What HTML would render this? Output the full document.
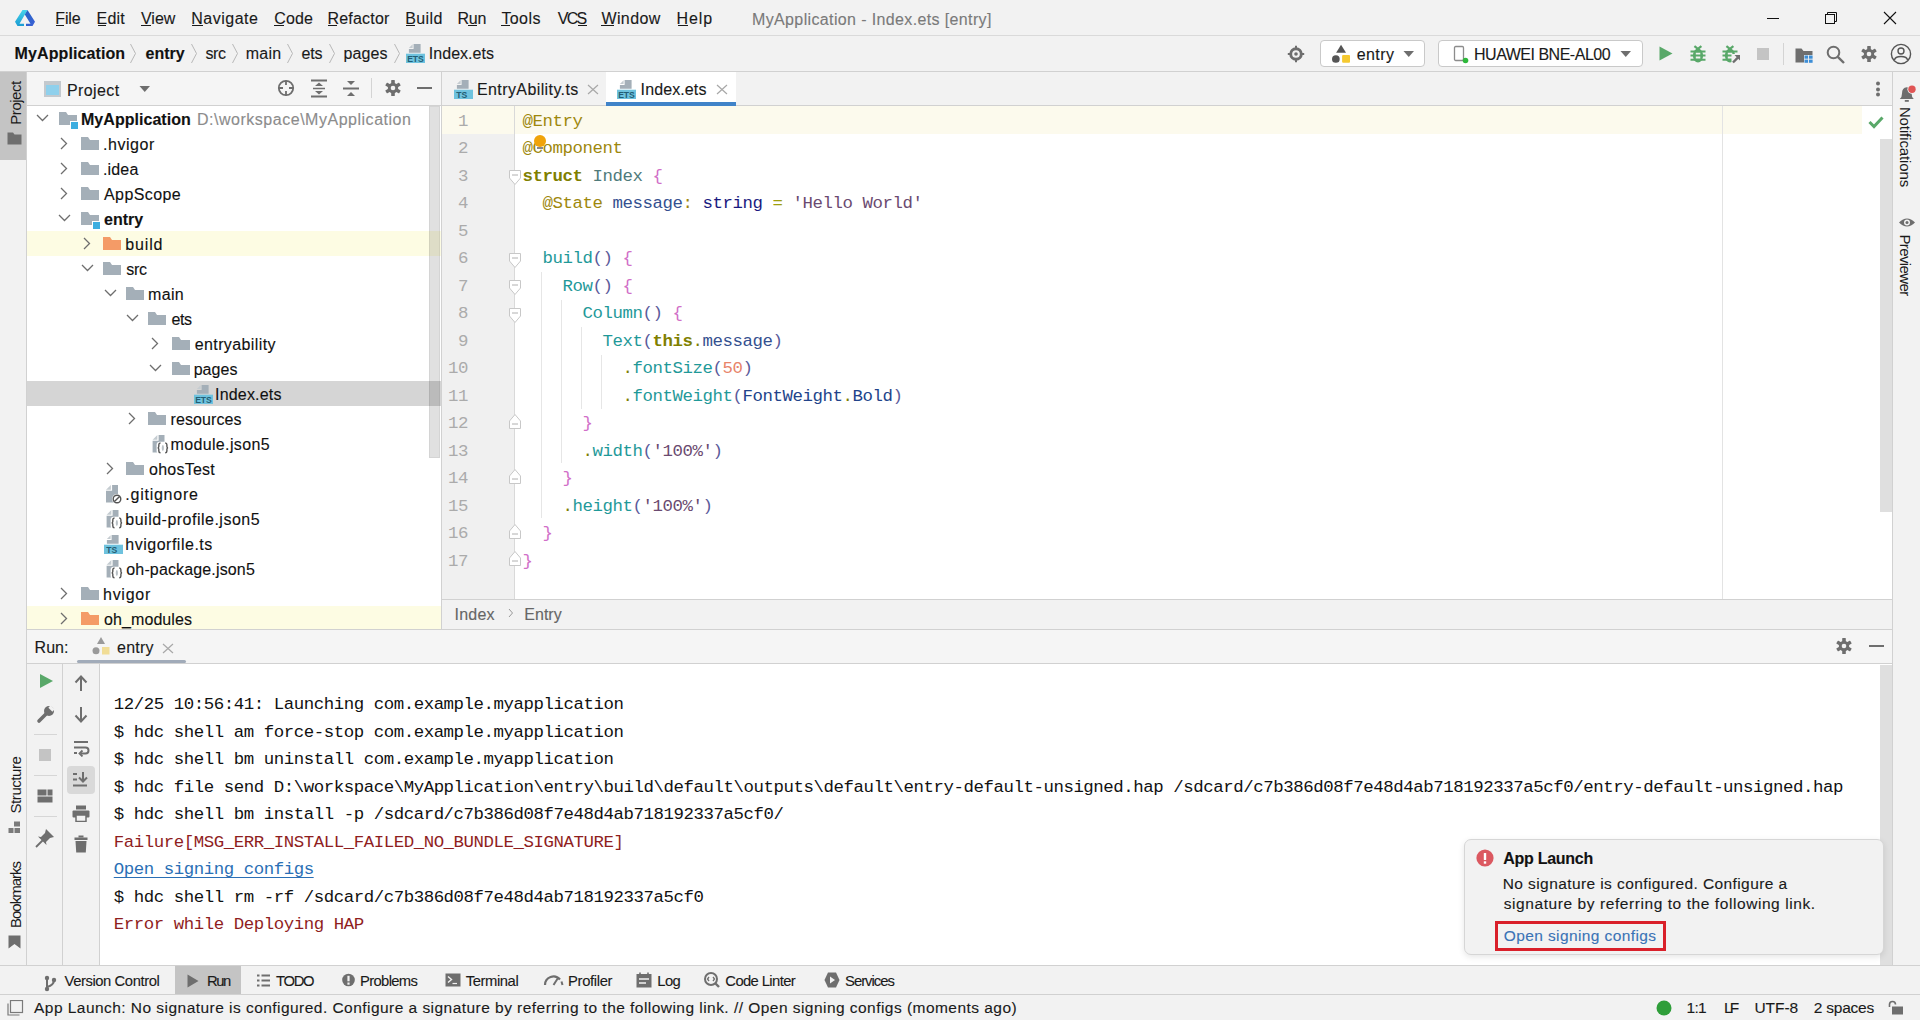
<!DOCTYPE html><html><head><meta charset="utf-8"><style>
*{margin:0;padding:0;box-sizing:border-box}
html,body{width:1920px;height:1020px;overflow:hidden;background:#f2f2f2;position:relative;font-family:'Liberation Sans',sans-serif}
body>div,body>svg{position:absolute}
.t{white-space:pre}
.s{-webkit-text-stroke:0.12px currentColor}
</style></head><body>
<div style="left:0px;top:0px;width:1920px;height:1020px;background:#f2f2f2;"></div>
<div style="left:0px;top:35px;width:1920px;height:1px;background:#dadada;"></div>
<div style="left:0px;top:71px;width:1920px;height:1px;background:#d1d1d1;"></div>
<div style="left:0px;top:72px;width:26px;height:893px;background:#f2f2f2;"></div>
<div style="left:26px;top:72px;width:1px;height:893px;background:#d1d1d1;"></div>
<div style="left:0px;top:72px;width:26px;height:88px;background:#c4c4c4;"></div>
<div style="left:27px;top:72px;width:414px;height:33px;background:#f5f5f5;"></div>
<div style="left:27px;top:105px;width:414px;height:1px;background:#d1d1d1;"></div>
<div style="left:27px;top:106px;width:414px;height:523px;background:#ffffff;"></div>
<div style="left:441px;top:72px;width:1px;height:557px;background:#d1d1d1;"></div>
<div style="left:27px;top:629px;width:1866px;height:1px;background:#d1d1d1;"></div>
<div style="left:442px;top:72px;width:1450px;height:33px;background:#f2f2f2;"></div>
<div style="left:442px;top:105px;width:1450px;height:1px;background:#d1d1d1;"></div>
<div style="left:606px;top:72px;width:130px;height:31px;background:#ffffff;"></div>
<div style="left:606px;top:102px;width:130px;height:4px;background:#4083c9;"></div>
<div style="left:442px;top:106px;width:72px;height:494px;background:#f0f0f0;"></div>
<div style="left:442px;top:106px;width:72px;height:28px;background:#fcfaed;"></div>
<div style="left:514px;top:106px;width:1px;height:494px;background:#d9d9d9;"></div>
<div style="left:515px;top:106px;width:1377px;height:494px;background:#ffffff;"></div>
<div style="left:515px;top:106px;width:1347px;height:28px;background:#fcfaed;"></div>
<div style="left:1722px;top:106px;width:1px;height:494px;background:#e3e3e3;"></div>
<div style="left:1880px;top:139px;width:12px;height:373px;background:#dfdfdf;"></div>
<div style="left:442px;top:599px;width:1450px;height:1px;background:#d1d1d1;"></div>
<div style="left:442px;top:600px;width:1450px;height:29px;background:#f2f2f2;"></div>
<div style="left:1892px;top:72px;width:1px;height:893px;background:#d1d1d1;"></div>
<div style="left:1893px;top:72px;width:27px;height:893px;background:#f2f2f2;"></div>
<div style="left:27px;top:630px;width:1865px;height:33px;background:#f5f5f5;"></div>
<div style="left:27px;top:663px;width:1865px;height:1px;background:#d1d1d1;"></div>
<div style="left:77px;top:660px;width:109px;height:3px;background:#a1abb9;border-radius:2px"></div>
<div style="left:27px;top:664px;width:72px;height:301px;background:#f2f2f2;"></div>
<div style="left:62px;top:664px;width:1px;height:301px;background:#d1d1d1;"></div>
<div style="left:99px;top:664px;width:1px;height:301px;background:#d1d1d1;"></div>
<div style="left:100px;top:664px;width:1792px;height:301px;background:#ffffff;"></div>
<div style="left:1880px;top:665px;width:12px;height:300px;background:#dfdfdf;"></div>
<div style="left:0px;top:965px;width:1920px;height:1px;background:#d1d1d1;"></div>
<div style="left:0px;top:966px;width:1920px;height:28px;background:#f2f2f2;"></div>
<div style="left:175px;top:966px;width:66px;height:28px;background:#c4c4c4;"></div>
<div style="left:0px;top:994px;width:1920px;height:1px;background:#d1d1d1;"></div>
<div style="left:0px;top:995px;width:1920px;height:25px;background:#f2f2f2;"></div>
<div class="t s" style="font-family:'Liberation Sans', sans-serif;font-size:16px;line-height:16px;color:#1a1a1a;font-weight:normal;letter-spacing:-0.161px;left:55.30px;top:11.00px;">File</div>
<div style="left:56px;top:25px;width:8px;height:1px;background:#1a1a1a;"></div>
<div class="t s" style="font-family:'Liberation Sans', sans-serif;font-size:16px;line-height:16px;color:#1a1a1a;font-weight:normal;letter-spacing:0.225px;left:96.50px;top:11.00px;">Edit</div>
<div style="left:98px;top:25px;width:8px;height:1px;background:#1a1a1a;"></div>
<div class="t s" style="font-family:'Liberation Sans', sans-serif;font-size:16px;line-height:16px;color:#1a1a1a;font-weight:normal;letter-spacing:-0.012px;left:141.00px;top:11.00px;">View</div>
<div style="left:141px;top:25px;width:10px;height:1px;background:#1a1a1a;"></div>
<div class="t s" style="font-family:'Liberation Sans', sans-serif;font-size:16px;line-height:16px;color:#1a1a1a;font-weight:normal;letter-spacing:0.493px;left:191.30px;top:11.00px;">Navigate</div>
<div style="left:192px;top:25px;width:11px;height:1px;background:#1a1a1a;"></div>
<div class="t s" style="font-family:'Liberation Sans', sans-serif;font-size:16px;line-height:16px;color:#1a1a1a;font-weight:normal;letter-spacing:0.116px;left:274.30px;top:11.00px;">Code</div>
<div style="left:274px;top:25px;width:10px;height:1px;background:#1a1a1a;"></div>
<div class="t s" style="font-family:'Liberation Sans', sans-serif;font-size:16px;line-height:16px;color:#1a1a1a;font-weight:normal;letter-spacing:0.194px;left:327.50px;top:11.00px;">Refactor</div>
<div style="left:328px;top:25px;width:9px;height:1px;background:#1a1a1a;"></div>
<div class="t s" style="font-family:'Liberation Sans', sans-serif;font-size:16px;line-height:16px;color:#1a1a1a;font-weight:normal;letter-spacing:0.355px;left:405.30px;top:11.00px;">Build</div>
<div style="left:406px;top:25px;width:9px;height:1px;background:#1a1a1a;"></div>
<div class="t s" style="font-family:'Liberation Sans', sans-serif;font-size:16px;line-height:16px;color:#1a1a1a;font-weight:normal;letter-spacing:-0.177px;left:457.40px;top:11.00px;">Run</div>
<div style="left:468px;top:25px;width:9px;height:1px;background:#1a1a1a;"></div>
<div class="t s" style="font-family:'Liberation Sans', sans-serif;font-size:16px;line-height:16px;color:#1a1a1a;font-weight:normal;letter-spacing:0.412px;left:501.40px;top:11.00px;">Tools</div>
<div style="left:501px;top:25px;width:9px;height:1px;background:#1a1a1a;"></div>
<div class="t s" style="font-family:'Liberation Sans', sans-serif;font-size:16px;line-height:16px;color:#1a1a1a;font-weight:normal;letter-spacing:-1.763px;left:557.80px;top:11.00px;">VCS</div>
<div style="left:578px;top:25px;width:9px;height:1px;background:#1a1a1a;"></div>
<div class="t s" style="font-family:'Liberation Sans', sans-serif;font-size:16px;line-height:16px;color:#1a1a1a;font-weight:normal;letter-spacing:0.410px;left:601.40px;top:11.00px;">Window</div>
<div style="left:601px;top:25px;width:13px;height:1px;background:#1a1a1a;"></div>
<div class="t s" style="font-family:'Liberation Sans', sans-serif;font-size:16px;line-height:16px;color:#1a1a1a;font-weight:normal;letter-spacing:0.897px;left:676.60px;top:11.00px;">Help</div>
<div style="left:678px;top:25px;width:10px;height:1px;background:#1a1a1a;"></div>
<div class="t s" style="font-family:'Liberation Sans', sans-serif;font-size:16px;line-height:16px;color:#7a7a7a;font-weight:normal;letter-spacing:0.368px;left:752.00px;top:11.50px;">MyApplication - Index.ets [entry]</div>
<svg style="left:14px;top:8px" width="22" height="19" viewBox="0 0 22 19"><defs><linearGradient id="lg1" x1="0" y1="0" x2="0" y2="1"><stop offset="0" stop-color="#45d4ea"/><stop offset="1" stop-color="#1a9bd2"/></linearGradient>
<linearGradient id="lg2" x1="0" y1="0" x2="1" y2="1"><stop offset="0" stop-color="#2167c4"/><stop offset="1" stop-color="#3d5fd6"/></linearGradient></defs>
<path d="M8.5 2 L13.5 2 L5.5 15.8 L10 15.8 L10 18 L3.5 18 L1 13.8 Z" fill="url(#lg1)"/>
<path d="M13.5 2 L21 13.8 L18.5 18 L12 18 L12 15.8 L16.5 15.8 L10.8 6.5 Z" fill="url(#lg2)"/></svg>
<div style="left:1767px;top:18px;width:12px;height:1px;background:#111;"></div>
<svg style="left:1823px;top:10px" width="16" height="16" viewBox="0 0 16 16"><rect x="2.5" y="4.5" width="9" height="9" fill="none" stroke="#111" stroke-width="1"/><path d="M4.5 4.5 V2.5 H13.5 V11.5 H11.5" fill="none" stroke="#111" stroke-width="1"/></svg>
<svg style="left:1883px;top:11px" width="14" height="14" viewBox="0 0 14 14"><path d="M1 1 L13 13 M13 1 L1 13" stroke="#111" stroke-width="1.1"/></svg>
<div class="t s" style="font-family:'Liberation Sans', sans-serif;font-size:16px;line-height:16px;color:#111;font-weight:bold;letter-spacing:0.095px;left:14.60px;top:46.10px;">MyApplication</div>
<svg style="left:129px;top:43px" width="9" height="21" viewBox="0 0 9 21"><path d="M1.5 1 L6.5 10.5 L1.5 20" fill="none" stroke="#b8b8b8" stroke-width="1"/></svg>
<div class="t s" style="font-family:'Liberation Sans', sans-serif;font-size:16px;line-height:16px;color:#111;font-weight:bold;letter-spacing:-0.007px;left:145.60px;top:46.10px;">entry</div>
<svg style="left:190px;top:43px" width="9" height="21" viewBox="0 0 9 21"><path d="M1.5 1 L6.5 10.5 L1.5 20" fill="none" stroke="#b8b8b8" stroke-width="1"/></svg>
<div class="t s" style="font-family:'Liberation Sans', sans-serif;font-size:16px;line-height:16px;color:#1a1a1a;font-weight:normal;letter-spacing:-0.464px;left:205.50px;top:46.10px;">src</div>
<svg style="left:230.5px;top:43px" width="9" height="21" viewBox="0 0 9 21"><path d="M1.5 1 L6.5 10.5 L1.5 20" fill="none" stroke="#b8b8b8" stroke-width="1"/></svg>
<div class="t s" style="font-family:'Liberation Sans', sans-serif;font-size:16px;line-height:16px;color:#1a1a1a;font-weight:normal;letter-spacing:0.240px;left:245.80px;top:46.10px;">main</div>
<svg style="left:286px;top:43px" width="9" height="21" viewBox="0 0 9 21"><path d="M1.5 1 L6.5 10.5 L1.5 20" fill="none" stroke="#b8b8b8" stroke-width="1"/></svg>
<div class="t s" style="font-family:'Liberation Sans', sans-serif;font-size:16px;line-height:16px;color:#1a1a1a;font-weight:normal;letter-spacing:-0.122px;left:301.50px;top:46.10px;">ets</div>
<svg style="left:328px;top:43px" width="9" height="21" viewBox="0 0 9 21"><path d="M1.5 1 L6.5 10.5 L1.5 20" fill="none" stroke="#b8b8b8" stroke-width="1"/></svg>
<div class="t s" style="font-family:'Liberation Sans', sans-serif;font-size:16px;line-height:16px;color:#1a1a1a;font-weight:normal;letter-spacing:0.102px;left:343.50px;top:46.10px;">pages</div>
<svg style="left:393px;top:43px" width="9" height="21" viewBox="0 0 9 21"><path d="M1.5 1 L6.5 10.5 L1.5 20" fill="none" stroke="#b8b8b8" stroke-width="1"/></svg>
<svg style="left:405.5px;top:44px" width="20" height="20" viewBox="0 0 20 20"><path d="M7.6 0 H14.6 V8.7 H2.9 V5 H7.6 Z" fill="#a4afb8"/><path d="M2.9 4 L6.6 0.3 V4 Z" fill="#c5ccd1"/><rect x="0" y="9.7" width="19" height="9.3" fill="#6ec2de"/><text x="9.5" y="18" text-anchor="middle" font-family="Liberation Sans" font-weight="bold" font-size="8.6" fill="#235e75">ETS</text></svg>
<div class="t s" style="font-family:'Liberation Sans', sans-serif;font-size:16px;line-height:16px;color:#1a1a1a;font-weight:normal;letter-spacing:0.034px;left:428.80px;top:46.10px;">Index.ets</div>
<svg style="left:1287px;top:45px" width="18" height="18" viewBox="0 0 18 18"><circle cx="9" cy="9" r="5.3" fill="none" stroke="#6e6e6e" stroke-width="2.9"/><circle cx="9" cy="9" r="1.8" fill="#6e6e6e"/><path d="M9 0.8 V3 M9 15 V17.2 M0.8 9 H3 M15 9 H17.2" stroke="#6e6e6e" stroke-width="2"/></svg>
<div style="left:1320px;top:40px;width:105px;height:27px;background:#fff;border:1px solid #c9c9c9;border-radius:4px"></div>
<svg style="left:1331px;top:44px" width="20" height="20" viewBox="0 0 20 20"><path d="M10.05 0.7 L15 8.8 H5.1 Z" fill="#555"/><circle cx="4.85" cy="15" r="3.85" fill="#555"/><rect x="11.1" y="11.1" width="7.9" height="7.7" rx="1" fill="#f5c930"/></svg>
<div class="t s" style="font-family:'Liberation Sans', sans-serif;font-size:16px;line-height:16px;color:#1a1a1a;font-weight:normal;letter-spacing:0.382px;left:1356.80px;top:46.60px;">entry</div>
<svg style="left:1403px;top:50px" width="12" height="8" viewBox="0 0 12 8"><path d="M0.5 1 H11 L5.75 7 Z" fill="#6e6e6e"/></svg>
<div style="left:1438px;top:40px;width:205px;height:27px;background:#fff;border:1px solid #c9c9c9;border-radius:4px"></div>
<svg style="left:1452px;top:45px" width="18" height="19" viewBox="0 0 18 19"><rect x="2.5" y="1.5" width="9" height="14" rx="1.2" fill="none" stroke="#8c8c8c" stroke-width="1.3"/><circle cx="13.5" cy="15.5" r="2.8" fill="#2eb83b"/></svg>
<div class="t s" style="font-family:'Liberation Sans', sans-serif;font-size:16px;line-height:16px;color:#1a1a1a;font-weight:normal;letter-spacing:-0.489px;left:1474.00px;top:46.60px;">HUAWEI BNE-AL00</div>
<svg style="left:1620px;top:50px" width="12" height="8" viewBox="0 0 12 8"><path d="M0.5 1 H11 L5.75 7 Z" fill="#6e6e6e"/></svg>
<svg style="left:1658px;top:45px" width="16" height="17" viewBox="0 0 16 17"><path d="M1.5 1.5 L14.5 8.5 L1.5 15.5 Z" fill="#59a869"/></svg>
<svg style="left:1689px;top:45px" width="18" height="19" viewBox="0 0 18 19"><path d="M1.5 6.6 H16.5 M1.5 10.6 H16.5 M1.5 14.7 H16.5" stroke="#59a869" stroke-width="2"/><path d="M5.4 1.1 L8.9 3.8 L12.4 1.1" fill="none" stroke="#59a869" stroke-width="2.2"/><ellipse cx="9" cy="10.6" rx="5.1" ry="7" fill="#59a869"/><path d="M6.8 8.6 H11.3 M6.8 12.5 H11.3" stroke="#f2f2f2" stroke-width="1.8"/></svg>
<svg style="left:1721px;top:45px" width="21" height="20" viewBox="0 0 21 20"><path d="M1.5 6.6 H16.5 M1.5 10.6 H16.5 M1.5 14.7 H16.5" stroke="#59a869" stroke-width="2"/><path d="M5.4 1.1 L8.9 3.8 L12.4 1.1" fill="none" stroke="#59a869" stroke-width="2.2"/><ellipse cx="9" cy="10.6" rx="5.1" ry="7" fill="#59a869"/><path d="M6.8 8.6 H11.3 M6.8 12.5 H11.3" stroke="#f2f2f2" stroke-width="1.8"/><path d="M10.5 9 H21 V20 H10.5 Z" fill="#f2f2f2"/><path d="M12 17.5 L17.3 12.2" stroke="#6e6e6e" stroke-width="2.4"/><path d="M13.5 10 H19 V15.5 Z" fill="#6e6e6e"/></svg>
<div style="left:1757px;top:48px;width:12px;height:12px;background:#c4c4c4;"></div>
<div style="left:1783px;top:43px;width:1px;height:22px;background:#d4d4d4;"></div>
<svg style="left:1795px;top:47px" width="19" height="17" viewBox="0 0 19 17"><path d="M0.5 1.5 H6.5 L8.5 4 H17.5 V8 H9 V15.5 H0.5 Z" fill="#6e6e6e"/><rect x="9.5" y="8.5" width="3.6" height="3.2" fill="#3d8ed6"/><rect x="14" y="8.5" width="3.6" height="3.2" fill="#3d8ed6"/><rect x="9.5" y="12.6" width="3.6" height="3.2" fill="#3d8ed6"/><rect x="14" y="12.6" width="3.6" height="3.2" fill="#3d8ed6"/></svg>
<svg style="left:1826px;top:45px" width="20" height="19" viewBox="0 0 20 19"><circle cx="7.5" cy="7.5" r="5.8" fill="none" stroke="#6e6e6e" stroke-width="2"/><path d="M11.8 11.8 L18 18" stroke="#6e6e6e" stroke-width="2.4"/></svg>
<svg style="left:1861px;top:46px" width="16" height="16" viewBox="0 0 16 16"><g transform="translate(8 8)"><circle r="5.2" fill="#6e6e6e"/><g fill="#6e6e6e"><rect x="-1.8" y="-8" width="3.6" height="16" rx="0.6"/><rect x="-1.8" y="-8" width="3.6" height="16" rx="0.6" transform="rotate(60)"/><rect x="-1.8" y="-8" width="3.6" height="16" rx="0.6" transform="rotate(120)"/></g><circle r="2.3" fill="#f2f2f2"/></g></svg>
<svg style="left:1890px;top:43px" width="22" height="22" viewBox="0 0 22 22"><circle cx="11" cy="11" r="9.6" fill="none" stroke="#555" stroke-width="1.4"/><circle cx="11" cy="8" r="3" fill="none" stroke="#555" stroke-width="1.4"/><path d="M4.5 17 Q5 13.5 11 13.5 Q17 13.5 17.5 17" fill="none" stroke="#555" stroke-width="1.4"/></svg>
<div class="t" style="font-family:'Liberation Sans', sans-serif;font-size:15px;line-height:15px;color:#1a1a1a;font-weight:normal;letter-spacing:-0.486px;left:15.2px;top:102.5px;transform:translate(-50%,-50%) rotate(-90deg);transform-origin:center;">Project</div>
<svg style="left:7px;top:132px" width="15" height="13" viewBox="0 0 15 13"><path d="M0.5 0.5 H6 L7.5 2.5 H14.5 V12.5 H0.5 Z" fill="#6e6e6e"/></svg>
<div class="t" style="font-family:'Liberation Sans', sans-serif;font-size:15px;line-height:15px;color:#1a1a1a;font-weight:normal;letter-spacing:-0.439px;left:15px;top:784.5px;transform:translate(-50%,-50%) rotate(-90deg);transform-origin:center;">Structure</div>
<svg style="left:8px;top:821px" width="13" height="13" viewBox="0 0 13 13"><rect x="6" y="0.5" width="6" height="5" fill="#7a7a7a"/><rect x="0.5" y="7" width="5" height="5" fill="#7a7a7a"/><rect x="6.5" y="7" width="5.5" height="5" fill="#7a7a7a"/></svg>
<div class="t" style="font-family:'Liberation Sans', sans-serif;font-size:15px;line-height:15px;color:#1a1a1a;font-weight:normal;letter-spacing:-0.978px;left:15px;top:894.85px;transform:translate(-50%,-50%) rotate(-90deg);transform-origin:center;">Bookmarks</div>
<svg style="left:8px;top:935px" width="13" height="14" viewBox="0 0 13 14"><path d="M0.5 0.5 H12.5 V13.5 L6.5 9 L0.5 13.5 Z" fill="#6e6e6e"/></svg>
<svg style="left:1898px;top:84px" width="20" height="20" viewBox="0 0 20 20"><path d="M1.8 15 Q4 13.5 4 9.5 Q4 3.6 8.8 3.3 Q13.6 3.6 13.6 9.5 Q13.6 13.5 15.8 15 Z" fill="#6e6e6e"/><rect x="6.8" y="16" width="4" height="1.8" fill="#6e6e6e"/><circle cx="14" cy="5.2" r="4.6" fill="#f2f2f2"/><circle cx="14" cy="5.2" r="3.7" fill="#e05555"/></svg>
<div class="t" style="font-family:'Liberation Sans', sans-serif;font-size:15px;line-height:15px;color:#1a1a1a;font-weight:normal;letter-spacing:-0.117px;left:1905px;top:147.4px;transform:translate(-50%,-50%) rotate(90deg);transform-origin:center;">Notifications</div>
<svg style="left:1898px;top:216px" width="18" height="13" viewBox="0 0 18 13"><path d="M1 6.5 Q9 -1.5 17 6.5 Q9 14.5 1 6.5 Z" fill="#6e6e6e"/><circle cx="9" cy="6.5" r="3" fill="#f2f2f2"/><circle cx="9" cy="6.5" r="1.5" fill="#6e6e6e"/></svg>
<div class="t" style="font-family:'Liberation Sans', sans-serif;font-size:15px;line-height:15px;color:#1a1a1a;font-weight:normal;letter-spacing:-0.624px;left:1905px;top:265.35px;transform:translate(-50%,-50%) rotate(90deg);transform-origin:center;">Previewer</div>
<svg style="left:43px;top:80px" width="20" height="19" viewBox="0 0 20 19"><rect x="1" y="1" width="17" height="16" fill="#c3c9ce"/><rect x="3" y="5" width="13" height="10" fill="#8fd0ec"/></svg>
<div class="t s" style="font-family:'Liberation Sans', sans-serif;font-size:16px;line-height:16px;color:#1a1a1a;font-weight:normal;letter-spacing:0.391px;left:67.00px;top:82.85px;">Project</div>
<svg style="left:139px;top:85px" width="12" height="8" viewBox="0 0 12 8"><path d="M0.5 1 H11 L5.75 7 Z" fill="#6e6e6e"/></svg>
<svg style="left:277px;top:79px" width="18" height="18" viewBox="0 0 18 18"><circle cx="9" cy="9" r="7.2" fill="none" stroke="#6e6e6e" stroke-width="1.8"/><path d="M9 1.5 V6 M9 12 V16.5 M1.5 9 H6 M12 9 H16.5" stroke="#6e6e6e" stroke-width="1.8"/></svg>
<svg style="left:310px;top:79px" width="18" height="19" viewBox="0 0 18 19"><path d="M1 1.5 H17 M1 17.5 H17" stroke="#6e6e6e" stroke-width="2"/><path d="M5 7 L9 3.5 L13 7 Z M5 12 L9 15.5 L13 12 Z" fill="#6e6e6e"/><path d="M3 9.5 H15" stroke="#6e6e6e" stroke-width="1.5"/></svg>
<svg style="left:342px;top:79px" width="18" height="19" viewBox="0 0 18 19"><path d="M1 9.5 H17" stroke="#6e6e6e" stroke-width="2"/><path d="M5 2 L9 6 L13 2 Z M5 17 L9 13 L13 17 Z" fill="#6e6e6e"/></svg>
<div style="left:371px;top:78px;width:1px;height:20px;background:#d4d4d4;"></div>
<svg style="left:385px;top:80px" width="16" height="16" viewBox="0 0 16 16"><g transform="translate(8 8)"><circle r="5.2" fill="#6e6e6e"/><g fill="#6e6e6e"><rect x="-1.8" y="-8" width="3.6" height="16" rx="0.6"/><rect x="-1.8" y="-8" width="3.6" height="16" rx="0.6" transform="rotate(60)"/><rect x="-1.8" y="-8" width="3.6" height="16" rx="0.6" transform="rotate(120)"/></g><circle r="2.3" fill="#f2f2f2"/></g></svg>
<div style="left:417px;top:87px;width:15px;height:2px;background:#6e6e6e;"></div>
<svg style="left:454px;top:80px" width="20" height="20" viewBox="0 0 20 20"><path d="M7.6 0 H14.6 V8.7 H2.9 V5 H7.6 Z" fill="#a4afb8"/><path d="M2.9 4 L6.6 0.3 V4 Z" fill="#c5ccd1"/><rect x="0" y="9.7" width="19" height="9.3" fill="#6ec2de"/><text x="2.2" y="18" font-family="Liberation Sans" font-weight="bold" font-size="8.6" fill="#235e75">TS</text></svg>
<div class="t s" style="font-family:'Liberation Sans', sans-serif;font-size:16px;line-height:16px;color:#1a1a1a;font-weight:normal;letter-spacing:0.398px;left:477.00px;top:82.10px;">EntryAbility.ts</div>
<svg style="left:587px;top:84px" width="12" height="11" viewBox="0 0 12 11"><path d="M1 1 L11 10 M11 1 L1 10" stroke="#a8a8a8" stroke-width="1.2"/></svg>
<svg style="left:616.5px;top:80px" width="20" height="20" viewBox="0 0 20 20"><path d="M7.6 0 H14.6 V8.7 H2.9 V5 H7.6 Z" fill="#a4afb8"/><path d="M2.9 4 L6.6 0.3 V4 Z" fill="#c5ccd1"/><rect x="0" y="9.7" width="19" height="9.3" fill="#6ec2de"/><text x="9.5" y="18" text-anchor="middle" font-family="Liberation Sans" font-weight="bold" font-size="8.6" fill="#235e75">ETS</text></svg>
<div class="t s" style="font-family:'Liberation Sans', sans-serif;font-size:16px;line-height:16px;color:#1a1a1a;font-weight:normal;letter-spacing:0.109px;left:640.60px;top:82.10px;">Index.ets</div>
<svg style="left:715.5px;top:84px" width="12" height="11" viewBox="0 0 12 11"><path d="M1 1 L11 10 M11 1 L1 10" stroke="#a8a8a8" stroke-width="1.2"/></svg>
<svg style="left:1875px;top:80.7px" width="6" height="6" viewBox="0 0 6 6"><circle cx="3" cy="2.5" r="2" fill="#6e6e6e"/></svg>
<svg style="left:1875px;top:86.5px" width="6" height="6" viewBox="0 0 6 6"><circle cx="3" cy="2.5" r="2" fill="#6e6e6e"/></svg>
<svg style="left:1875px;top:92.2px" width="6" height="6" viewBox="0 0 6 6"><circle cx="3" cy="2.5" r="2" fill="#6e6e6e"/></svg>
<div style="left:27px;top:231px;width:414px;height:25px;background:#fdfce3;"></div>
<div style="left:27px;top:606px;width:414px;height:23px;background:#fdfce3;"></div>
<div style="left:27px;top:381px;width:414px;height:25px;background:#d5d5d5;"></div>
<div style="left:429px;top:106px;width:11px;height:352px;background:rgba(0,0,0,0.12);border:1px solid rgba(0,0,0,0.05)"></div>
<svg style="left:36px;top:114px" width="13" height="8" viewBox="0 0 13 8"><path d="M1 1 L6.5 6.5 L12 1" fill="none" stroke="#6e6e6e" stroke-width="1.3"/></svg>
<svg style="left:59px;top:112px" width="20" height="18" viewBox="0 0 20 18"><path d="M0 0 H7 L9 3 H18 V13 H0 Z" fill="#a4afb8"/><rect x="11" y="9" width="8" height="8" fill="#fff"/><rect x="12" y="10" width="7" height="7" fill="#3daee0"/></svg>
<div class="t s" style="font-family:'Liberation Sans', sans-serif;font-size:16px;line-height:16px;color:#111;font-weight:bold;letter-spacing:0.036px;left:81.00px;top:111.50px;">MyApplication</div>
<svg style="left:60px;top:137px" width="8" height="13" viewBox="0 0 8 13"><path d="M1 1 L6.5 6.5 L1 12" fill="none" stroke="#6e6e6e" stroke-width="1.3"/></svg>
<svg style="left:81px;top:137px" width="20" height="18" viewBox="0 0 20 18"><path d="M0 0 H7 L9 3 H18 V13 H0 Z" fill="#a4afb8"/></svg>
<div class="t s" style="font-family:'Liberation Sans', sans-serif;font-size:16px;line-height:16px;color:#111;font-weight:normal;letter-spacing:0.551px;left:103.00px;top:136.50px;">.hvigor</div>
<svg style="left:60px;top:162px" width="8" height="13" viewBox="0 0 8 13"><path d="M1 1 L6.5 6.5 L1 12" fill="none" stroke="#6e6e6e" stroke-width="1.3"/></svg>
<svg style="left:81px;top:162px" width="20" height="18" viewBox="0 0 20 18"><path d="M0 0 H7 L9 3 H18 V13 H0 Z" fill="#a4afb8"/></svg>
<div class="t s" style="font-family:'Liberation Sans', sans-serif;font-size:16px;line-height:16px;color:#111;font-weight:normal;letter-spacing:0.151px;left:103.00px;top:161.50px;">.idea</div>
<svg style="left:60px;top:187px" width="8" height="13" viewBox="0 0 8 13"><path d="M1 1 L6.5 6.5 L1 12" fill="none" stroke="#6e6e6e" stroke-width="1.3"/></svg>
<svg style="left:81px;top:187px" width="20" height="18" viewBox="0 0 20 18"><path d="M0 0 H7 L9 3 H18 V13 H0 Z" fill="#a4afb8"/></svg>
<div class="t s" style="font-family:'Liberation Sans', sans-serif;font-size:16px;line-height:16px;color:#111;font-weight:normal;letter-spacing:0.409px;left:104.00px;top:186.50px;">AppScope</div>
<svg style="left:58px;top:214px" width="13" height="8" viewBox="0 0 13 8"><path d="M1 1 L6.5 6.5 L12 1" fill="none" stroke="#6e6e6e" stroke-width="1.3"/></svg>
<svg style="left:81px;top:212px" width="20" height="18" viewBox="0 0 20 18"><path d="M0 0 H7 L9 3 H18 V13 H0 Z" fill="#a4afb8"/><rect x="11" y="9" width="8" height="8" fill="#fff"/><rect x="12" y="10" width="7" height="7" fill="#3daee0"/></svg>
<div class="t s" style="font-family:'Liberation Sans', sans-serif;font-size:16px;line-height:16px;color:#111;font-weight:bold;letter-spacing:0.018px;left:104.00px;top:211.50px;">entry</div>
<svg style="left:83px;top:237px" width="8" height="13" viewBox="0 0 8 13"><path d="M1 1 L6.5 6.5 L1 12" fill="none" stroke="#6e6e6e" stroke-width="1.3"/></svg>
<svg style="left:103px;top:237px" width="20" height="18" viewBox="0 0 20 18"><path d="M0 0 H7 L9 3 H18 V13 H0 Z" fill="#f49b67"/></svg>
<div class="t s" style="font-family:'Liberation Sans', sans-serif;font-size:16px;line-height:16px;color:#111;font-weight:normal;letter-spacing:0.848px;left:125.30px;top:236.50px;">build</div>
<svg style="left:81px;top:264px" width="13" height="8" viewBox="0 0 13 8"><path d="M1 1 L6.5 6.5 L12 1" fill="none" stroke="#6e6e6e" stroke-width="1.3"/></svg>
<svg style="left:103px;top:262px" width="20" height="18" viewBox="0 0 20 18"><path d="M0 0 H7 L9 3 H18 V13 H0 Z" fill="#a4afb8"/></svg>
<div class="t s" style="font-family:'Liberation Sans', sans-serif;font-size:16px;line-height:16px;color:#111;font-weight:normal;letter-spacing:-0.364px;left:126.30px;top:261.50px;">src</div>
<svg style="left:104px;top:289px" width="13" height="8" viewBox="0 0 13 8"><path d="M1 1 L6.5 6.5 L12 1" fill="none" stroke="#6e6e6e" stroke-width="1.3"/></svg>
<svg style="left:126px;top:287px" width="20" height="18" viewBox="0 0 20 18"><path d="M0 0 H7 L9 3 H18 V13 H0 Z" fill="#a4afb8"/></svg>
<div class="t s" style="font-family:'Liberation Sans', sans-serif;font-size:16px;line-height:16px;color:#111;font-weight:normal;letter-spacing:0.340px;left:148.00px;top:286.50px;">main</div>
<svg style="left:126px;top:314px" width="13" height="8" viewBox="0 0 13 8"><path d="M1 1 L6.5 6.5 L12 1" fill="none" stroke="#6e6e6e" stroke-width="1.3"/></svg>
<svg style="left:148px;top:312px" width="20" height="18" viewBox="0 0 20 18"><path d="M0 0 H7 L9 3 H18 V13 H0 Z" fill="#a4afb8"/></svg>
<div class="t s" style="font-family:'Liberation Sans', sans-serif;font-size:16px;line-height:16px;color:#111;font-weight:normal;letter-spacing:-0.372px;left:171.50px;top:311.50px;">ets</div>
<svg style="left:151px;top:337px" width="8" height="13" viewBox="0 0 8 13"><path d="M1 1 L6.5 6.5 L1 12" fill="none" stroke="#6e6e6e" stroke-width="1.3"/></svg>
<svg style="left:172px;top:337px" width="20" height="18" viewBox="0 0 20 18"><path d="M0 0 H7 L9 3 H18 V13 H0 Z" fill="#a4afb8"/></svg>
<div class="t s" style="font-family:'Liberation Sans', sans-serif;font-size:16px;line-height:16px;color:#111;font-weight:normal;letter-spacing:0.402px;left:194.70px;top:336.50px;">entryability</div>
<svg style="left:149px;top:364px" width="13" height="8" viewBox="0 0 13 8"><path d="M1 1 L6.5 6.5 L12 1" fill="none" stroke="#6e6e6e" stroke-width="1.3"/></svg>
<svg style="left:172px;top:362px" width="20" height="18" viewBox="0 0 20 18"><path d="M0 0 H7 L9 3 H18 V13 H0 Z" fill="#a4afb8"/></svg>
<div class="t s" style="font-family:'Liberation Sans', sans-serif;font-size:16px;line-height:16px;color:#111;font-weight:normal;letter-spacing:0.027px;left:193.70px;top:361.50px;">pages</div>
<svg style="left:194px;top:385px" width="20" height="20" viewBox="0 0 20 20"><path d="M7.6 0 H14.6 V8.7 H2.9 V5 H7.6 Z" fill="#a4afb8"/><path d="M2.9 4 L6.6 0.3 V4 Z" fill="#c5ccd1"/><rect x="0" y="9.7" width="19" height="9.3" fill="#6ec2de"/><text x="9.5" y="18" text-anchor="middle" font-family="Liberation Sans" font-weight="bold" font-size="8.6" fill="#235e75">ETS</text></svg>
<div class="t s" style="font-family:'Liberation Sans', sans-serif;font-size:16px;line-height:16px;color:#111;font-weight:normal;letter-spacing:0.196px;left:215.00px;top:386.50px;">Index.ets</div>
<svg style="left:128px;top:412px" width="8" height="13" viewBox="0 0 8 13"><path d="M1 1 L6.5 6.5 L1 12" fill="none" stroke="#6e6e6e" stroke-width="1.3"/></svg>
<svg style="left:148px;top:412px" width="20" height="18" viewBox="0 0 20 18"><path d="M0 0 H7 L9 3 H18 V13 H0 Z" fill="#a4afb8"/></svg>
<div class="t s" style="font-family:'Liberation Sans', sans-serif;font-size:16px;line-height:16px;color:#111;font-weight:normal;letter-spacing:0.106px;left:170.50px;top:411.50px;">resources</div>
<svg style="left:150px;top:435px" width="20" height="20" viewBox="0 0 20 20"><path d="M8.6 0 H14.5 V17.5 H2.6 V5.8 H8.6 Z" fill="#a4afb8"/><path d="M2.6 4.7 L7.4 0 V4.7 Z" fill="#c5ccd1"/><rect x="6.6" y="6.8" width="12.8" height="12.2" rx="3" fill="#fff"/><ellipse cx="12.85" cy="12.9" rx="1.1" ry="3" fill="#b9c1c6"/><path d="M10.5 8 Q8.8 8 8.8 9.8 V11.6 Q8.8 12.9 7.6 12.9 Q8.8 12.9 8.8 14.2 V16 Q8.8 17.8 10.5 17.8 M15.2 8 Q16.9 8 16.9 9.8 V11.6 Q16.9 12.9 18.1 12.9 Q16.9 12.9 16.9 14.2 V16 Q16.9 17.8 15.2 17.8" fill="none" stroke="#555" stroke-width="1.4"/></svg>
<div class="t s" style="font-family:'Liberation Sans', sans-serif;font-size:16px;line-height:16px;color:#111;font-weight:normal;letter-spacing:0.357px;left:170.50px;top:436.50px;">module.json5</div>
<svg style="left:106px;top:462px" width="8" height="13" viewBox="0 0 8 13"><path d="M1 1 L6.5 6.5 L1 12" fill="none" stroke="#6e6e6e" stroke-width="1.3"/></svg>
<svg style="left:126px;top:462px" width="20" height="18" viewBox="0 0 20 18"><path d="M0 0 H7 L9 3 H18 V13 H0 Z" fill="#a4afb8"/></svg>
<div class="t s" style="font-family:'Liberation Sans', sans-serif;font-size:16px;line-height:16px;color:#111;font-weight:normal;letter-spacing:0.244px;left:149.00px;top:461.50px;">ohosTest</div>
<svg style="left:104px;top:485px" width="20" height="20" viewBox="0 0 20 20"><path d="M8.1 0 H14 V17.5 H2 V5.8 H8.1 Z" fill="#a4afb8"/><path d="M2 4.7 L6.9 0 V4.7 Z" fill="#c5ccd1"/><circle cx="13" cy="14" r="5" fill="#fff"/><circle cx="13" cy="14" r="3.8" fill="none" stroke="#555" stroke-width="1.4"/><path d="M10.4 16.6 L15.6 11.4" stroke="#555" stroke-width="1.4"/></svg>
<div class="t s" style="font-family:'Liberation Sans', sans-serif;font-size:16px;line-height:16px;color:#111;font-weight:normal;letter-spacing:0.753px;left:125.30px;top:486.50px;">.gitignore</div>
<svg style="left:104px;top:510px" width="20" height="20" viewBox="0 0 20 20"><path d="M8.6 0 H14.5 V17.5 H2.6 V5.8 H8.6 Z" fill="#a4afb8"/><path d="M2.6 4.7 L7.4 0 V4.7 Z" fill="#c5ccd1"/><rect x="6.6" y="6.8" width="12.8" height="12.2" rx="3" fill="#fff"/><ellipse cx="12.85" cy="12.9" rx="1.1" ry="3" fill="#b9c1c6"/><path d="M10.5 8 Q8.8 8 8.8 9.8 V11.6 Q8.8 12.9 7.6 12.9 Q8.8 12.9 8.8 14.2 V16 Q8.8 17.8 10.5 17.8 M15.2 8 Q16.9 8 16.9 9.8 V11.6 Q16.9 12.9 18.1 12.9 Q16.9 12.9 16.9 14.2 V16 Q16.9 17.8 15.2 17.8" fill="none" stroke="#555" stroke-width="1.4"/></svg>
<div class="t s" style="font-family:'Liberation Sans', sans-serif;font-size:16px;line-height:16px;color:#111;font-weight:normal;letter-spacing:0.494px;left:125.30px;top:511.50px;">build-profile.json5</div>
<svg style="left:104px;top:535px" width="20" height="20" viewBox="0 0 20 20"><path d="M7.6 0 H14.6 V8.7 H2.9 V5 H7.6 Z" fill="#a4afb8"/><path d="M2.9 4 L6.6 0.3 V4 Z" fill="#c5ccd1"/><rect x="0" y="9.7" width="19" height="9.3" fill="#6ec2de"/><text x="2.2" y="18" font-family="Liberation Sans" font-weight="bold" font-size="8.6" fill="#235e75">TS</text></svg>
<div class="t s" style="font-family:'Liberation Sans', sans-serif;font-size:16px;line-height:16px;color:#111;font-weight:normal;letter-spacing:0.507px;left:125.30px;top:536.50px;">hvigorfile.ts</div>
<svg style="left:104px;top:560px" width="20" height="20" viewBox="0 0 20 20"><path d="M8.6 0 H14.5 V17.5 H2.6 V5.8 H8.6 Z" fill="#a4afb8"/><path d="M2.6 4.7 L7.4 0 V4.7 Z" fill="#c5ccd1"/><rect x="6.6" y="6.8" width="12.8" height="12.2" rx="3" fill="#fff"/><ellipse cx="12.85" cy="12.9" rx="1.1" ry="3" fill="#b9c1c6"/><path d="M10.5 8 Q8.8 8 8.8 9.8 V11.6 Q8.8 12.9 7.6 12.9 Q8.8 12.9 8.8 14.2 V16 Q8.8 17.8 10.5 17.8 M15.2 8 Q16.9 8 16.9 9.8 V11.6 Q16.9 12.9 18.1 12.9 Q16.9 12.9 16.9 14.2 V16 Q16.9 17.8 15.2 17.8" fill="none" stroke="#555" stroke-width="1.4"/></svg>
<div class="t s" style="font-family:'Liberation Sans', sans-serif;font-size:16px;line-height:16px;color:#111;font-weight:normal;letter-spacing:0.146px;left:126.30px;top:561.50px;">oh-package.json5</div>
<svg style="left:60px;top:587px" width="8" height="13" viewBox="0 0 8 13"><path d="M1 1 L6.5 6.5 L1 12" fill="none" stroke="#6e6e6e" stroke-width="1.3"/></svg>
<svg style="left:81px;top:587px" width="20" height="18" viewBox="0 0 20 18"><path d="M0 0 H7 L9 3 H18 V13 H0 Z" fill="#a4afb8"/></svg>
<div class="t s" style="font-family:'Liberation Sans', sans-serif;font-size:16px;line-height:16px;color:#111;font-weight:normal;letter-spacing:0.730px;left:103.00px;top:586.50px;">hvigor</div>
<svg style="left:60px;top:612px" width="8" height="13" viewBox="0 0 8 13"><path d="M1 1 L6.5 6.5 L1 12" fill="none" stroke="#6e6e6e" stroke-width="1.3"/></svg>
<svg style="left:81px;top:612px" width="20" height="18" viewBox="0 0 20 18"><path d="M0 0 H7 L9 3 H18 V13 H0 Z" fill="#f49b67"/></svg>
<div class="t s" style="font-family:'Liberation Sans', sans-serif;font-size:16px;line-height:16px;color:#111;font-weight:normal;letter-spacing:0.092px;left:104.00px;top:611.50px;">oh_modules</div>
<div class="t s" style="font-family:'Liberation Sans', sans-serif;font-size:16px;line-height:16px;color:#8c8c8c;font-weight:normal;letter-spacing:0.517px;left:197.00px;top:111.50px;">D:\workspace\MyApplication</div>
<div class="t" style="font-family:'Liberation Mono', monospace;font-size:17.4px;line-height:17.4px;color:#ababab;font-weight:normal;letter-spacing:-0.440px;left:458.00px;top:112.58px;">1</div>
<div class="t" style="font-family:'Liberation Mono', monospace;font-size:17.4px;line-height:17.4px;color:#9e880d;font-weight:normal;letter-spacing:-0.440px;left:522.50px;top:112.58px;">@Entry</div>
<div class="t" style="font-family:'Liberation Mono', monospace;font-size:17.4px;line-height:17.4px;color:#ababab;font-weight:normal;letter-spacing:-0.440px;left:458.00px;top:140.08px;">2</div>
<div class="t" style="font-family:'Liberation Mono', monospace;font-size:17.4px;line-height:17.4px;color:#9e880d;font-weight:normal;letter-spacing:-0.440px;left:522.50px;top:140.08px;">@Component</div>
<div class="t" style="font-family:'Liberation Mono', monospace;font-size:17.4px;line-height:17.4px;color:#ababab;font-weight:normal;letter-spacing:-0.440px;left:458.00px;top:167.58px;">3</div>
<div class="t" style="font-family:'Liberation Mono', monospace;font-size:17.4px;line-height:17.4px;color:#808000;font-weight:bold;letter-spacing:-0.440px;left:522.50px;top:167.58px;">struct</div>
<div class="t" style="font-family:'Liberation Mono', monospace;font-size:17.4px;line-height:17.4px;color:#4f7a7a;font-weight:normal;letter-spacing:-0.440px;left:592.50px;top:167.58px;">Index</div>
<div class="t" style="font-family:'Liberation Mono', monospace;font-size:17.4px;line-height:17.4px;color:#d16fc8;font-weight:normal;letter-spacing:-0.440px;left:652.50px;top:167.58px;">{</div>
<div class="t" style="font-family:'Liberation Mono', monospace;font-size:17.4px;line-height:17.4px;color:#ababab;font-weight:normal;letter-spacing:-0.440px;left:458.00px;top:195.08px;">4</div>
<div class="t" style="font-family:'Liberation Mono', monospace;font-size:17.4px;line-height:17.4px;color:#9e880d;font-weight:normal;letter-spacing:-0.440px;left:542.50px;top:195.08px;">@State</div>
<div class="t" style="font-family:'Liberation Mono', monospace;font-size:17.4px;line-height:17.4px;color:#35508f;font-weight:normal;letter-spacing:-0.440px;left:612.50px;top:195.08px;">message</div>
<div class="t" style="font-family:'Liberation Mono', monospace;font-size:17.4px;line-height:17.4px;color:#9e880d;font-weight:normal;letter-spacing:-0.440px;left:682.50px;top:195.08px;">:</div>
<div class="t" style="font-family:'Liberation Mono', monospace;font-size:17.4px;line-height:17.4px;color:#1a1a80;font-weight:normal;letter-spacing:-0.440px;left:702.50px;top:195.08px;">string</div>
<div class="t" style="font-family:'Liberation Mono', monospace;font-size:17.4px;line-height:17.4px;color:#9e9e0e;font-weight:normal;letter-spacing:-0.440px;left:772.50px;top:195.08px;">=</div>
<div class="t" style="font-family:'Liberation Mono', monospace;font-size:17.4px;line-height:17.4px;color:#6b4a70;font-weight:normal;letter-spacing:-0.440px;left:792.50px;top:195.08px;">&#x27;Hello World&#x27;</div>
<div class="t" style="font-family:'Liberation Mono', monospace;font-size:17.4px;line-height:17.4px;color:#ababab;font-weight:normal;letter-spacing:-0.440px;left:458.00px;top:222.58px;">5</div>
<div class="t" style="font-family:'Liberation Mono', monospace;font-size:17.4px;line-height:17.4px;color:#ababab;font-weight:normal;letter-spacing:-0.440px;left:458.00px;top:250.08px;">6</div>
<div class="t" style="font-family:'Liberation Mono', monospace;font-size:17.4px;line-height:17.4px;color:#1f9999;font-weight:normal;letter-spacing:-0.440px;left:542.50px;top:250.08px;">build</div>
<div class="t" style="font-family:'Liberation Mono', monospace;font-size:17.4px;line-height:17.4px;color:#5b5b9b;font-weight:normal;letter-spacing:-0.440px;left:592.50px;top:250.08px;">()</div>
<div class="t" style="font-family:'Liberation Mono', monospace;font-size:17.4px;line-height:17.4px;color:#d16fc8;font-weight:normal;letter-spacing:-0.440px;left:622.50px;top:250.08px;">{</div>
<div class="t" style="font-family:'Liberation Mono', monospace;font-size:17.4px;line-height:17.4px;color:#ababab;font-weight:normal;letter-spacing:-0.440px;left:458.00px;top:277.58px;">7</div>
<div class="t" style="font-family:'Liberation Mono', monospace;font-size:17.4px;line-height:17.4px;color:#1f9999;font-weight:normal;letter-spacing:-0.440px;left:562.50px;top:277.58px;">Row</div>
<div class="t" style="font-family:'Liberation Mono', monospace;font-size:17.4px;line-height:17.4px;color:#5b5b9b;font-weight:normal;letter-spacing:-0.440px;left:592.50px;top:277.58px;">()</div>
<div class="t" style="font-family:'Liberation Mono', monospace;font-size:17.4px;line-height:17.4px;color:#d16fc8;font-weight:normal;letter-spacing:-0.440px;left:622.50px;top:277.58px;">{</div>
<div class="t" style="font-family:'Liberation Mono', monospace;font-size:17.4px;line-height:17.4px;color:#ababab;font-weight:normal;letter-spacing:-0.440px;left:458.00px;top:305.08px;">8</div>
<div class="t" style="font-family:'Liberation Mono', monospace;font-size:17.4px;line-height:17.4px;color:#1f9999;font-weight:normal;letter-spacing:-0.440px;left:582.50px;top:305.08px;">Column</div>
<div class="t" style="font-family:'Liberation Mono', monospace;font-size:17.4px;line-height:17.4px;color:#5b5b9b;font-weight:normal;letter-spacing:-0.440px;left:642.50px;top:305.08px;">()</div>
<div class="t" style="font-family:'Liberation Mono', monospace;font-size:17.4px;line-height:17.4px;color:#d16fc8;font-weight:normal;letter-spacing:-0.440px;left:672.50px;top:305.08px;">{</div>
<div class="t" style="font-family:'Liberation Mono', monospace;font-size:17.4px;line-height:17.4px;color:#ababab;font-weight:normal;letter-spacing:-0.440px;left:458.00px;top:332.58px;">9</div>
<div class="t" style="font-family:'Liberation Mono', monospace;font-size:17.4px;line-height:17.4px;color:#1f9999;font-weight:normal;letter-spacing:-0.440px;left:602.50px;top:332.58px;">Text</div>
<div class="t" style="font-family:'Liberation Mono', monospace;font-size:17.4px;line-height:17.4px;color:#5b5b9b;font-weight:normal;letter-spacing:-0.440px;left:642.50px;top:332.58px;">(</div>
<div class="t" style="font-family:'Liberation Mono', monospace;font-size:17.4px;line-height:17.4px;color:#808000;font-weight:bold;letter-spacing:-0.440px;left:652.50px;top:332.58px;">this</div>
<div class="t" style="font-family:'Liberation Mono', monospace;font-size:17.4px;line-height:17.4px;color:#808000;font-weight:normal;letter-spacing:-0.440px;left:692.50px;top:332.58px;">.</div>
<div class="t" style="font-family:'Liberation Mono', monospace;font-size:17.4px;line-height:17.4px;color:#35508f;font-weight:normal;letter-spacing:-0.440px;left:702.50px;top:332.58px;">message</div>
<div class="t" style="font-family:'Liberation Mono', monospace;font-size:17.4px;line-height:17.4px;color:#5b5b9b;font-weight:normal;letter-spacing:-0.440px;left:772.50px;top:332.58px;">)</div>
<div class="t" style="font-family:'Liberation Mono', monospace;font-size:17.4px;line-height:17.4px;color:#ababab;font-weight:normal;letter-spacing:-0.440px;left:448.00px;top:360.08px;">10</div>
<div class="t" style="font-family:'Liberation Mono', monospace;font-size:17.4px;line-height:17.4px;color:#808000;font-weight:normal;letter-spacing:-0.440px;left:622.50px;top:360.08px;">.</div>
<div class="t" style="font-family:'Liberation Mono', monospace;font-size:17.4px;line-height:17.4px;color:#1f9999;font-weight:normal;letter-spacing:-0.440px;left:632.50px;top:360.08px;">fontSize</div>
<div class="t" style="font-family:'Liberation Mono', monospace;font-size:17.4px;line-height:17.4px;color:#5b5b9b;font-weight:normal;letter-spacing:-0.440px;left:712.50px;top:360.08px;">(</div>
<div class="t" style="font-family:'Liberation Mono', monospace;font-size:17.4px;line-height:17.4px;color:#e8846a;font-weight:normal;letter-spacing:-0.440px;left:722.50px;top:360.08px;">50</div>
<div class="t" style="font-family:'Liberation Mono', monospace;font-size:17.4px;line-height:17.4px;color:#5b5b9b;font-weight:normal;letter-spacing:-0.440px;left:742.50px;top:360.08px;">)</div>
<div class="t" style="font-family:'Liberation Mono', monospace;font-size:17.4px;line-height:17.4px;color:#ababab;font-weight:normal;letter-spacing:-0.440px;left:448.00px;top:387.58px;">11</div>
<div class="t" style="font-family:'Liberation Mono', monospace;font-size:17.4px;line-height:17.4px;color:#808000;font-weight:normal;letter-spacing:-0.440px;left:622.50px;top:387.58px;">.</div>
<div class="t" style="font-family:'Liberation Mono', monospace;font-size:17.4px;line-height:17.4px;color:#1f9999;font-weight:normal;letter-spacing:-0.440px;left:632.50px;top:387.58px;">fontWeight</div>
<div class="t" style="font-family:'Liberation Mono', monospace;font-size:17.4px;line-height:17.4px;color:#5b5b9b;font-weight:normal;letter-spacing:-0.440px;left:732.50px;top:387.58px;">(</div>
<div class="t" style="font-family:'Liberation Mono', monospace;font-size:17.4px;line-height:17.4px;color:#22438a;font-weight:normal;letter-spacing:-0.440px;left:742.50px;top:387.58px;">FontWeight</div>
<div class="t" style="font-family:'Liberation Mono', monospace;font-size:17.4px;line-height:17.4px;color:#808000;font-weight:normal;letter-spacing:-0.440px;left:842.50px;top:387.58px;">.</div>
<div class="t" style="font-family:'Liberation Mono', monospace;font-size:17.4px;line-height:17.4px;color:#22438a;font-weight:normal;letter-spacing:-0.440px;left:852.50px;top:387.58px;">Bold</div>
<div class="t" style="font-family:'Liberation Mono', monospace;font-size:17.4px;line-height:17.4px;color:#5b5b9b;font-weight:normal;letter-spacing:-0.440px;left:892.50px;top:387.58px;">)</div>
<div class="t" style="font-family:'Liberation Mono', monospace;font-size:17.4px;line-height:17.4px;color:#ababab;font-weight:normal;letter-spacing:-0.440px;left:448.00px;top:415.08px;">12</div>
<div class="t" style="font-family:'Liberation Mono', monospace;font-size:17.4px;line-height:17.4px;color:#d16fc8;font-weight:normal;letter-spacing:-0.440px;left:582.50px;top:415.08px;">}</div>
<div class="t" style="font-family:'Liberation Mono', monospace;font-size:17.4px;line-height:17.4px;color:#ababab;font-weight:normal;letter-spacing:-0.440px;left:448.00px;top:442.58px;">13</div>
<div class="t" style="font-family:'Liberation Mono', monospace;font-size:17.4px;line-height:17.4px;color:#808000;font-weight:normal;letter-spacing:-0.440px;left:582.50px;top:442.58px;">.</div>
<div class="t" style="font-family:'Liberation Mono', monospace;font-size:17.4px;line-height:17.4px;color:#1f9999;font-weight:normal;letter-spacing:-0.440px;left:592.50px;top:442.58px;">width</div>
<div class="t" style="font-family:'Liberation Mono', monospace;font-size:17.4px;line-height:17.4px;color:#5b5b9b;font-weight:normal;letter-spacing:-0.440px;left:642.50px;top:442.58px;">(</div>
<div class="t" style="font-family:'Liberation Mono', monospace;font-size:17.4px;line-height:17.4px;color:#6b4a70;font-weight:normal;letter-spacing:-0.440px;left:652.50px;top:442.58px;">&#x27;100%&#x27;</div>
<div class="t" style="font-family:'Liberation Mono', monospace;font-size:17.4px;line-height:17.4px;color:#5b5b9b;font-weight:normal;letter-spacing:-0.440px;left:712.50px;top:442.58px;">)</div>
<div class="t" style="font-family:'Liberation Mono', monospace;font-size:17.4px;line-height:17.4px;color:#ababab;font-weight:normal;letter-spacing:-0.440px;left:448.00px;top:470.08px;">14</div>
<div class="t" style="font-family:'Liberation Mono', monospace;font-size:17.4px;line-height:17.4px;color:#d16fc8;font-weight:normal;letter-spacing:-0.440px;left:562.50px;top:470.08px;">}</div>
<div class="t" style="font-family:'Liberation Mono', monospace;font-size:17.4px;line-height:17.4px;color:#ababab;font-weight:normal;letter-spacing:-0.440px;left:448.00px;top:497.58px;">15</div>
<div class="t" style="font-family:'Liberation Mono', monospace;font-size:17.4px;line-height:17.4px;color:#808000;font-weight:normal;letter-spacing:-0.440px;left:562.50px;top:497.58px;">.</div>
<div class="t" style="font-family:'Liberation Mono', monospace;font-size:17.4px;line-height:17.4px;color:#1f9999;font-weight:normal;letter-spacing:-0.440px;left:572.50px;top:497.58px;">height</div>
<div class="t" style="font-family:'Liberation Mono', monospace;font-size:17.4px;line-height:17.4px;color:#5b5b9b;font-weight:normal;letter-spacing:-0.440px;left:632.50px;top:497.58px;">(</div>
<div class="t" style="font-family:'Liberation Mono', monospace;font-size:17.4px;line-height:17.4px;color:#6b4a70;font-weight:normal;letter-spacing:-0.440px;left:642.50px;top:497.58px;">&#x27;100%&#x27;</div>
<div class="t" style="font-family:'Liberation Mono', monospace;font-size:17.4px;line-height:17.4px;color:#5b5b9b;font-weight:normal;letter-spacing:-0.440px;left:702.50px;top:497.58px;">)</div>
<div class="t" style="font-family:'Liberation Mono', monospace;font-size:17.4px;line-height:17.4px;color:#ababab;font-weight:normal;letter-spacing:-0.440px;left:448.00px;top:525.08px;">16</div>
<div class="t" style="font-family:'Liberation Mono', monospace;font-size:17.4px;line-height:17.4px;color:#d16fc8;font-weight:normal;letter-spacing:-0.440px;left:542.50px;top:525.08px;">}</div>
<div class="t" style="font-family:'Liberation Mono', monospace;font-size:17.4px;line-height:17.4px;color:#ababab;font-weight:normal;letter-spacing:-0.440px;left:448.00px;top:552.58px;">17</div>
<div class="t" style="font-family:'Liberation Mono', monospace;font-size:17.4px;line-height:17.4px;color:#d16fc8;font-weight:normal;letter-spacing:-0.440px;left:522.50px;top:552.58px;">}</div>
<div style="left:541px;top:272px;width:1px;height:246px;background:#e6e6e6;"></div>
<div style="left:561px;top:299.5px;width:1px;height:163.5px;background:#e6e6e6;"></div>
<div style="left:581px;top:327px;width:1px;height:82px;background:#e6e6e6;"></div>
<div style="left:601px;top:354.5px;width:1px;height:54.5px;background:#e6e6e6;"></div>
<svg style="left:509px;top:170.0px" width="12" height="16" viewBox="0 0 12 16"><path d="M0.5 0.5 H11.5 V8 L6 14.5 L0.5 8 Z" fill="#fff" stroke="#c8c8c8" stroke-width="1"/><path d="M3 5 H9" stroke="#b0b0b0" stroke-width="1"/></svg>
<svg style="left:509px;top:252.5px" width="12" height="16" viewBox="0 0 12 16"><path d="M0.5 0.5 H11.5 V8 L6 14.5 L0.5 8 Z" fill="#fff" stroke="#c8c8c8" stroke-width="1"/><path d="M3 5 H9" stroke="#b0b0b0" stroke-width="1"/></svg>
<svg style="left:509px;top:280.0px" width="12" height="16" viewBox="0 0 12 16"><path d="M0.5 0.5 H11.5 V8 L6 14.5 L0.5 8 Z" fill="#fff" stroke="#c8c8c8" stroke-width="1"/><path d="M3 5 H9" stroke="#b0b0b0" stroke-width="1"/></svg>
<svg style="left:509px;top:307.5px" width="12" height="16" viewBox="0 0 12 16"><path d="M0.5 0.5 H11.5 V8 L6 14.5 L0.5 8 Z" fill="#fff" stroke="#c8c8c8" stroke-width="1"/><path d="M3 5 H9" stroke="#b0b0b0" stroke-width="1"/></svg>
<svg style="left:509px;top:412.5px" width="12" height="16" viewBox="0 0 12 16"><path d="M0.5 15.5 H11.5 V8 L6 1.5 L0.5 8 Z" fill="#fff" stroke="#c8c8c8" stroke-width="1"/><path d="M3 11 H9" stroke="#b0b0b0" stroke-width="1"/></svg>
<svg style="left:509px;top:467.5px" width="12" height="16" viewBox="0 0 12 16"><path d="M0.5 15.5 H11.5 V8 L6 1.5 L0.5 8 Z" fill="#fff" stroke="#c8c8c8" stroke-width="1"/><path d="M3 11 H9" stroke="#b0b0b0" stroke-width="1"/></svg>
<svg style="left:509px;top:522.5px" width="12" height="16" viewBox="0 0 12 16"><path d="M0.5 15.5 H11.5 V8 L6 1.5 L0.5 8 Z" fill="#fff" stroke="#c8c8c8" stroke-width="1"/><path d="M3 11 H9" stroke="#b0b0b0" stroke-width="1"/></svg>
<svg style="left:509px;top:550.0px" width="12" height="16" viewBox="0 0 12 16"><path d="M0.5 15.5 H11.5 V8 L6 1.5 L0.5 8 Z" fill="#fff" stroke="#c8c8c8" stroke-width="1"/><path d="M3 11 H9" stroke="#b0b0b0" stroke-width="1"/></svg>
<svg style="left:532px;top:133px" width="16" height="18" viewBox="0 0 16 18"><circle cx="8" cy="8" r="6" fill="#f0a30a"/><rect x="5" y="14" width="6" height="2" fill="#888"/></svg>
<div style="left:1863px;top:109px;width:27px;height:25px;background:#fff;border-radius:4px"></div>
<svg style="left:1868px;top:115px" width="16" height="14" viewBox="0 0 16 14"><path d="M1.5 7 L6 11.5 L14.5 2.5" fill="none" stroke="#59a869" stroke-width="3"/></svg>
<div class="t s" style="font-family:'Liberation Sans', sans-serif;font-size:16px;line-height:16px;color:#666;font-weight:normal;letter-spacing:0.215px;left:454.60px;top:607.40px;">Index</div>
<svg style="left:508px;top:608px" width="6" height="10" viewBox="0 0 6 10"><path d="M1 1 L4.5 5 L1 9" fill="none" stroke="#999" stroke-width="1"/></svg>
<div class="t s" style="font-family:'Liberation Sans', sans-serif;font-size:16px;line-height:16px;color:#666;font-weight:normal;letter-spacing:0.014px;left:524.30px;top:607.40px;">Entry</div>
<div class="t s" style="font-family:'Liberation Sans', sans-serif;font-size:16px;line-height:16px;color:#1a1a1a;font-weight:normal;letter-spacing:-0.017px;left:34.60px;top:639.60px;">Run:</div>
<svg style="left:91px;top:636px" width="20" height="20" viewBox="0 0 20 20"><path d="M10 1 L14 8 H6 Z" fill="#9a9a9a"/><circle cx="5" cy="14.8" r="3.5" fill="#9a9a9a"/><rect x="11" y="11" width="7.5" height="7.5" fill="#f1dd96"/></svg>
<div class="t s" style="font-family:'Liberation Sans', sans-serif;font-size:16px;line-height:16px;color:#1a1a1a;font-weight:normal;letter-spacing:0.257px;left:117.00px;top:639.60px;">entry</div>
<svg style="left:162px;top:643px" width="12" height="11" viewBox="0 0 12 11"><path d="M1 1 L11 10 M11 1 L1 10" stroke="#a8a8a8" stroke-width="1.2"/></svg>
<svg style="left:1836px;top:638px" width="16" height="16" viewBox="0 0 16 16"><g transform="translate(8 8)"><circle r="5.2" fill="#6e6e6e"/><g fill="#6e6e6e"><rect x="-1.8" y="-8" width="3.6" height="16" rx="0.6"/><rect x="-1.8" y="-8" width="3.6" height="16" rx="0.6" transform="rotate(60)"/><rect x="-1.8" y="-8" width="3.6" height="16" rx="0.6" transform="rotate(120)"/></g><circle r="2.3" fill="#f2f2f2"/></g></svg>
<div style="left:1869px;top:645px;width:15px;height:2px;background:#6e6e6e;"></div>
<svg style="left:39px;top:673px" width="15" height="16" viewBox="0 0 15 16"><path d="M1 1 L14 8 L1 15 Z" fill="#59a869"/></svg>
<svg style="left:36px;top:704px" width="20" height="20" viewBox="0 0 20 20"><path d="M3 17 L10 10" stroke="#6e6e6e" stroke-width="3.6" stroke-linecap="round"/><circle cx="13" cy="7" r="5" fill="#6e6e6e"/><path d="M13.5 2.5 L17.5 6.5" stroke="#f2f2f2" stroke-width="3.2"/></svg>
<div style="left:34px;top:734px;width:23px;height:1px;background:#d6d6d6;"></div>
<div style="left:39px;top:749px;width:12px;height:12px;background:#c4c4c4;"></div>
<div style="left:34px;top:775px;width:23px;height:1px;background:#d6d6d6;"></div>
<svg style="left:37px;top:789px" width="16" height="14" viewBox="0 0 16 14"><rect x="0.5" y="0.5" width="9" height="6" fill="#6e6e6e"/><rect x="10.5" y="0.5" width="5" height="6" fill="#6e6e6e"/><rect x="0.5" y="7.5" width="15" height="6" fill="#6e6e6e"/></svg>
<div style="left:34px;top:816px;width:23px;height:1px;background:#d6d6d6;"></div>
<svg style="left:35px;top:828px" width="20" height="20" viewBox="0 0 20 20"><path d="M1 19 L8 12" stroke="#6e6e6e" stroke-width="1.8"/><path d="M11 1 L19 9 L15 10 L11 14 L11.5 17 L3 8.5 L6 9 L10 5 Z" fill="#6e6e6e"/></svg>
<svg style="left:74px;top:675px" width="14" height="16" viewBox="0 0 14 16"><path d="M7 2 V16" stroke="#6e6e6e" stroke-width="2"/><path d="M1.5 7.5 L7 1.5 L12.5 7.5" fill="none" stroke="#6e6e6e" stroke-width="2"/></svg>
<svg style="left:74px;top:707px" width="14" height="16" viewBox="0 0 14 16"><path d="M7 0 V14" stroke="#6e6e6e" stroke-width="2"/><path d="M1.5 8.5 L7 14.5 L12.5 8.5" fill="none" stroke="#6e6e6e" stroke-width="2"/></svg>
<svg style="left:73px;top:740px" width="17" height="17" viewBox="0 0 17 17"><path d="M1 2 H15 M1 13 H4" stroke="#6e6e6e" stroke-width="2"/><path d="M1 7.5 H12.5 A3 3 0 0 1 12.5 13.5 H8" fill="none" stroke="#6e6e6e" stroke-width="2"/><path d="M9.5 10.5 L6.5 13.5 L9.5 16.5" fill="none" stroke="#6e6e6e" stroke-width="1.8"/></svg>
<div style="left:67px;top:766px;width:28px;height:28px;background:#d9d9d9;border-radius:4px"></div>
<svg style="left:72px;top:771px" width="17" height="17" viewBox="0 0 17 17"><path d="M1 3 H5 M1 8.5 H5 M1 14.5 H15" stroke="#6e6e6e" stroke-width="2"/><path d="M11 1 V9" stroke="#6e6e6e" stroke-width="2"/><path d="M7 6.5 L11 10.5 L15 6.5" fill="none" stroke="#6e6e6e" stroke-width="2"/></svg>
<svg style="left:72px;top:805px" width="18" height="17" viewBox="0 0 18 17"><rect x="4" y="0.5" width="10" height="4" fill="#6e6e6e"/><rect x="0.5" y="5.5" width="17" height="7" rx="1" fill="#6e6e6e"/><rect x="4" y="10" width="10" height="6.5" fill="#f2f2f2" stroke="#6e6e6e" stroke-width="1.5"/></svg>
<svg style="left:74px;top:835px" width="14" height="18" viewBox="0 0 14 18"><rect x="0.5" y="2.5" width="13" height="2.5" fill="#6e6e6e"/><rect x="4.5" y="0.5" width="5" height="2" fill="#6e6e6e"/><path d="M1.5 6 H12.5 L11.8 17.5 H2.2 Z" fill="#6e6e6e"/></svg>
<div class="t" style="font-family:'Liberation Mono', monospace;font-size:17.4px;line-height:17.4px;color:#111;font-weight:normal;letter-spacing:-0.440px;left:113.75px;top:696.18px;">12/25 10:56:41: Launching com.example.myapplication</div>
<div class="t" style="font-family:'Liberation Mono', monospace;font-size:17.4px;line-height:17.4px;color:#111;font-weight:normal;letter-spacing:-0.440px;left:113.75px;top:723.68px;">$ hdc shell am force-stop com.example.myapplication</div>
<div class="t" style="font-family:'Liberation Mono', monospace;font-size:17.4px;line-height:17.4px;color:#111;font-weight:normal;letter-spacing:-0.440px;left:113.75px;top:751.18px;">$ hdc shell bm uninstall com.example.myapplication</div>
<div class="t" style="font-family:'Liberation Mono', monospace;font-size:17.4px;line-height:17.4px;color:#111;font-weight:normal;letter-spacing:-0.440px;left:113.75px;top:778.68px;">$ hdc file send D:\workspace\MyApplication\entry\build\default\outputs\default\entry-default-unsigned.hap /sdcard/c7b386d08f7e48d4ab718192337a5cf0/entry-default-unsigned.hap</div>
<div class="t" style="font-family:'Liberation Mono', monospace;font-size:17.4px;line-height:17.4px;color:#111;font-weight:normal;letter-spacing:-0.440px;left:113.75px;top:806.18px;">$ hdc shell bm install -p /sdcard/c7b386d08f7e48d4ab718192337a5cf0/</div>
<div class="t" style="font-family:'Liberation Mono', monospace;font-size:17.4px;line-height:17.4px;color:#8f1e1e;font-weight:normal;letter-spacing:-0.440px;left:113.75px;top:833.68px;">Failure[MSG_ERR_INSTALL_FAILED_NO_BUNDLE_SIGNATURE]</div>
<div class="t" style="font-family:'Liberation Mono', monospace;font-size:17.4px;line-height:17.4px;color:#2a6fb5;font-weight:normal;letter-spacing:-0.440px;text-decoration:underline;text-underline-offset:3px;left:113.75px;top:861.18px;">Open signing configs</div>
<div class="t" style="font-family:'Liberation Mono', monospace;font-size:17.4px;line-height:17.4px;color:#111;font-weight:normal;letter-spacing:-0.440px;left:113.75px;top:888.68px;">$ hdc shell rm -rf /sdcard/c7b386d08f7e48d4ab718192337a5cf0</div>
<div class="t" style="font-family:'Liberation Mono', monospace;font-size:17.4px;line-height:17.4px;color:#8f1e1e;font-weight:normal;letter-spacing:-0.440px;left:113.75px;top:916.18px;">Error while Deploying HAP</div>
<svg style="left:44px;top:975px" width="13" height="17" viewBox="0 0 13 17"><circle cx="3" cy="3" r="2.2" fill="#6e6e6e"/><circle cx="3" cy="14" r="2.2" fill="#6e6e6e"/><circle cx="10" cy="5" r="2.2" fill="#6e6e6e"/><path d="M3 3 V14 M10 5 Q10 10 3 12" fill="none" stroke="#6e6e6e" stroke-width="2"/></svg>
<div class="t s" style="font-family:'Liberation Sans', sans-serif;font-size:14.8px;line-height:14.8px;color:#1a1a1a;font-weight:normal;letter-spacing:-0.420px;left:64.50px;top:973.52px;">Version Control</div>
<svg style="left:187px;top:974px" width="12" height="14" viewBox="0 0 12 14"><path d="M0.5 0.5 L11.5 7 L0.5 13.5 Z" fill="#6e6e6e"/></svg>
<div class="t s" style="font-family:'Liberation Sans', sans-serif;font-size:14.8px;line-height:14.8px;color:#1a1a1a;font-weight:normal;letter-spacing:-1.458px;left:207.00px;top:973.52px;">Run</div>
<svg style="left:257px;top:974px" width="14" height="13" viewBox="0 0 14 13"><path d="M0 1.5 H2.5 M4.5 1.5 H13 M0 6.5 H2.5 M4.5 6.5 H13 M0 11.5 H2.5 M4.5 11.5 H13" stroke="#6e6e6e" stroke-width="2"/></svg>
<div class="t s" style="font-family:'Liberation Sans', sans-serif;font-size:14.8px;line-height:14.8px;color:#1a1a1a;font-weight:normal;letter-spacing:-1.322px;left:276.00px;top:973.52px;">TODO</div>
<svg style="left:342px;top:973px" width="13" height="14" viewBox="0 0 13 14"><circle cx="6.5" cy="7" r="6.3" fill="#6e6e6e"/><rect x="5.4" y="2.8" width="2.2" height="5.5" fill="#f2f2f2"/><rect x="5.4" y="9.5" width="2.2" height="2.2" fill="#f2f2f2"/></svg>
<div class="t s" style="font-family:'Liberation Sans', sans-serif;font-size:14.8px;line-height:14.8px;color:#1a1a1a;font-weight:normal;letter-spacing:-0.657px;left:360.00px;top:973.52px;">Problems</div>
<svg style="left:445px;top:973px" width="16" height="14" viewBox="0 0 16 14"><rect x="0.5" y="0.5" width="15" height="13" fill="#6e6e6e"/><path d="M3 3.5 L6.5 6.5 L3 9.5" fill="none" stroke="#f2f2f2" stroke-width="1.4"/><path d="M7.5 10.5 H12" stroke="#f2f2f2" stroke-width="1.2"/></svg>
<div class="t s" style="font-family:'Liberation Sans', sans-serif;font-size:14.8px;line-height:14.8px;color:#1a1a1a;font-weight:normal;letter-spacing:-0.432px;left:465.80px;top:973.52px;">Terminal</div>
<svg style="left:543px;top:973px" width="21" height="14" viewBox="0 0 21 14"><path d="M2 12 A8.5 8.5 0 0 1 17 6.5" fill="none" stroke="#6e6e6e" stroke-width="2.2"/><path d="M10.5 12 L15 5" stroke="#6e6e6e" stroke-width="2"/><path d="M18.5 8.5 L19.5 12" stroke="#6e6e6e" stroke-width="2"/></svg>
<div class="t s" style="font-family:'Liberation Sans', sans-serif;font-size:14.8px;line-height:14.8px;color:#1a1a1a;font-weight:normal;letter-spacing:-0.334px;left:568.00px;top:973.52px;">Profiler</div>
<svg style="left:636px;top:972px" width="16" height="16" viewBox="0 0 16 16"><rect x="0.5" y="2" width="15" height="13.5" fill="#6e6e6e"/><path d="M4 0.5 V3 M12 0.5 V3" stroke="#6e6e6e" stroke-width="1.6"/><path d="M3 7 H13 M3 11 H10" stroke="#f2f2f2" stroke-width="1.4"/></svg>
<div class="t s" style="font-family:'Liberation Sans', sans-serif;font-size:14.8px;line-height:14.8px;color:#1a1a1a;font-weight:normal;letter-spacing:-0.579px;left:657.30px;top:973.52px;">Log</div>
<svg style="left:704px;top:972px" width="16" height="16" viewBox="0 0 16 16"><circle cx="7" cy="7" r="6" fill="none" stroke="#6e6e6e" stroke-width="2"/><path d="M11 11 L15 15" stroke="#6e6e6e" stroke-width="2.4"/><path d="M5 5 L3.5 7 L5 9 M9 5 L10.5 7 L9 9" fill="none" stroke="#6e6e6e" stroke-width="1.3"/></svg>
<div class="t s" style="font-family:'Liberation Sans', sans-serif;font-size:14.8px;line-height:14.8px;color:#1a1a1a;font-weight:normal;letter-spacing:-0.607px;left:725.30px;top:973.52px;">Code Linter</div>
<svg style="left:824px;top:972px" width="16" height="16" viewBox="0 0 16 16"><path d="M4 0.5 H12 L15.5 8 L12 15.5 H4 L0.5 8 Z" fill="#6e6e6e"/><path d="M6 4.5 L11 8 L6 11.5 Z" fill="#f2f2f2"/></svg>
<div class="t s" style="font-family:'Liberation Sans', sans-serif;font-size:14.8px;line-height:14.8px;color:#1a1a1a;font-weight:normal;letter-spacing:-0.977px;left:845.00px;top:973.52px;">Services</div>
<svg style="left:7px;top:1000px" width="17" height="16" viewBox="0 0 17 16"><rect x="3.5" y="0.5" width="12" height="12" fill="none" stroke="#7a7a7a" stroke-width="1.2"/><path d="M1 3.5 V15 H12.5" fill="none" stroke="#7a7a7a" stroke-width="1.2"/></svg>
<div class="t s" style="font-family:'Liberation Sans', sans-serif;font-size:15.5px;line-height:15.5px;color:#1a1a1a;font-weight:normal;letter-spacing:0.460px;left:34.00px;top:999.83px;">App Launch: No signature is configured. Configure a signature by referring to the following link. // Open signing configs (moments ago)</div>
<svg style="left:1656px;top:1000px" width="16" height="16" viewBox="0 0 16 16"><circle cx="8" cy="8" r="7.5" fill="#2f9e3a"/></svg>
<div class="t s" style="font-family:'Liberation Sans', sans-serif;font-size:15.5px;line-height:15.5px;color:#1a1a1a;font-weight:normal;letter-spacing:-0.713px;left:1686.50px;top:999.83px;">1:1</div>
<div class="t s" style="font-family:'Liberation Sans', sans-serif;font-size:15.5px;line-height:15.5px;color:#1a1a1a;font-weight:normal;letter-spacing:-2.870px;left:1724.00px;top:999.83px;">LF</div>
<div class="t s" style="font-family:'Liberation Sans', sans-serif;font-size:15.5px;line-height:15.5px;color:#1a1a1a;font-weight:normal;letter-spacing:-0.073px;left:1754.50px;top:999.83px;">UTF-8</div>
<div class="t s" style="font-family:'Liberation Sans', sans-serif;font-size:15.5px;line-height:15.5px;color:#1a1a1a;font-weight:normal;letter-spacing:-0.220px;left:1813.75px;top:999.83px;">2 spaces</div>
<svg style="left:1888px;top:1000px" width="16" height="15" viewBox="0 0 16 15"><path d="M1.5 7 V4.5 A3 3 0 0 1 7.5 4.5" fill="none" stroke="#6e6e6e" stroke-width="1.6"/><rect x="4" y="6.5" width="11" height="8" fill="#6e6e6e"/></svg>
<div style="left:1463.5px;top:839px;width:420.5px;height:116px;background:#f2f2f2;border:1px solid #d6d6d6;border-radius:7px;box-shadow:0 2px 6px rgba(0,0,0,0.10)"></div>
<svg style="left:1476px;top:849px" width="18" height="18" viewBox="0 0 18 18"><circle cx="9" cy="9" r="8.6" fill="#db5860"/><rect x="7.8" y="4" width="2.4" height="7" rx="0.5" fill="#fff"/><rect x="7.8" y="12.3" width="2.4" height="2.4" fill="#fff"/></svg>
<div class="t s" style="font-family:'Liberation Sans', sans-serif;font-size:16px;line-height:16px;color:#111;font-weight:bold;letter-spacing:-0.274px;left:1503.20px;top:851.10px;">App Launch</div>
<div class="t s" style="font-family:'Liberation Sans', sans-serif;font-size:15.5px;line-height:15.5px;color:#1a1a1a;font-weight:normal;letter-spacing:0.409px;left:1502.75px;top:876.28px;">No signature is configured. Configure a</div>
<div class="t s" style="font-family:'Liberation Sans', sans-serif;font-size:15.5px;line-height:15.5px;color:#1a1a1a;font-weight:normal;letter-spacing:0.574px;left:1503.75px;top:896.28px;">signature by referring to the following link.</div>
<div style="left:1494.5px;top:920.5px;width:171.25px;height:30px;border:3px solid #d9202a"></div>
<div class="t s" style="font-family:'Liberation Sans', sans-serif;font-size:15.5px;line-height:15.5px;color:#3a72b6;font-weight:normal;letter-spacing:0.394px;left:1503.75px;top:927.53px;">Open signing configs</div>
</body></html>
